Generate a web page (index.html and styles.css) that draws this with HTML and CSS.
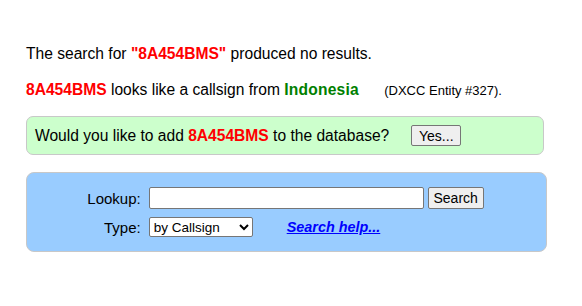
FILE: index.html
```html
<!DOCTYPE html>
<html>
<head>
<meta charset="utf-8">
<link rel="stylesheet" href="styles.css">
</head>
<body>
<div class="page">
  <p class="msg first">The search for <b class="red">"8A454BMS"</b> produced no results.</p>
  <p class="msg second"><b class="red">8A454BMS</b> looks like a callsign from <b class="green">Indonesia</b> <span class="small">(DXCC Entity #327).</span></p>
  <div class="addbox">
    <span>Would you like to add <b class="red">8A454BMS</b> to the database?</span>
    <button class="btn yes">Yes...</button>
  </div>
  <div class="lookupbox">
    <div class="form">
      <label class="lbl">Lookup:</label>
      <div class="row"><input class="txt" type="text"><button class="btn search">Search</button></div>
      <label class="lbl">Type:</label>
      <div class="row"><select class="sel"><option>by Callsign</option></select><a class="help" href="#">Search help...</a></div>
    </div>
  </div>
</div>
</body>
</html>
```

FILE: styles.css
```css
html, body { margin: 0; padding: 0; background: #fff; }
body { font-family: "Liberation Sans", Arial, sans-serif; color: #000; }
.page { padding: 44px 0 0 26px; width: 521px; }
.msg { margin: 0; font-size: 15.6px; line-height: 20px; }
.second { margin-top: 16px; }
.red { color: #ff0000; }
.green { color: #008000; }
.green { letter-spacing: 0.2px; }
.small { font-size: 13px; margin-left: 21px; }
.addbox {
  margin-top: 15px;
  background: #ccffcc; border: 1px solid #c8c8c8; border-radius: 7px;
  display: flex; align-items: center; font-size: 15.6px;
  padding-left: 8px; box-sizing: border-box; width: 518px; height: 39px;
}
.btn {
  font-family: "Liberation Sans", Arial, sans-serif; font-size: 14px;
  background: #efefef; border: 1px solid #767676; border-radius: 2px;
  height: 21px; padding: 0 6px; color: #000;
}
.yes { margin-left: 22px; width: 50px; padding: 0; }
.lookupbox {
  margin-top: 17px; width: 521px; height: 80px; box-sizing: border-box;
  background: #99ccff; border: 1px solid #c8c8c8; border-radius: 8px;
  display: flex; justify-content: center; align-items: center;
}
.form {
  display: grid; grid-template-columns: auto auto; column-gap: 8px; row-gap: 8px;
  align-items: center; font-size: 15px; margin-left: -2px;
}
.lbl { text-align: right; }
.row { display: flex; align-items: center; }
.txt { width: 275px; height: 22px; box-sizing: border-box; border: 1px solid #767676; border-radius: 2px; margin: 0; padding: 1px 2px; }
.search { margin-left: 4px; height: 22px; width: 56px; padding: 0; }
.sel { width: 104px; height: 20px; font-family: "Liberation Sans", Arial, sans-serif; font-size: 13.5px; border: 1px solid #767676; border-radius: 2px; background: #fff; margin: 0; }
.help { margin-left: 34px; color: #0000ff; font-weight: bold; font-style: italic; font-size: 14.4px; }
```
